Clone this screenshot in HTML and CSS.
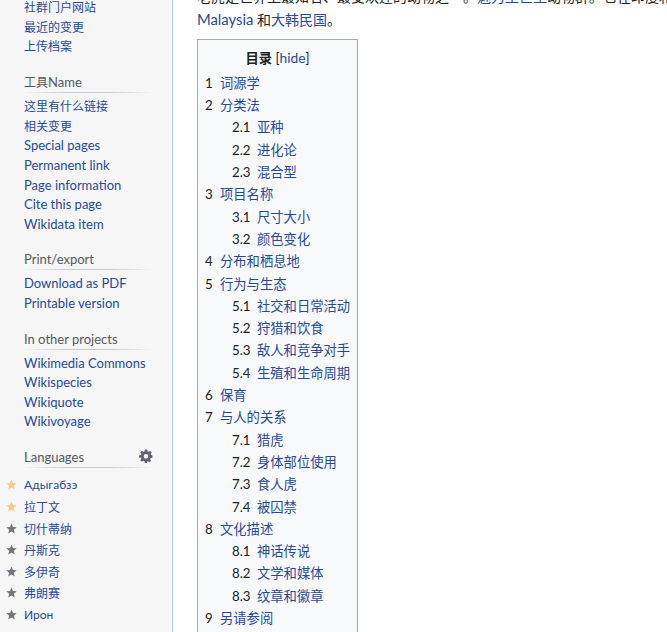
FILE: index.html
```html
<!DOCTYPE html>
<html lang="zh">
<head>
    <meta charset="UTF-8">
    <meta name="viewport" content="width=device-width, initial-scale=1.0">
    <title>虎</title>
    <link rel="stylesheet" href="styles.css">
</head>
<body>
    <div class="page">
        <div class="sidebar">
            <ul class="side-list first-list">
                <li class="cjk"><a href="#">社群门户网站</a></li>
                <li class="cjk"><a href="#">最近的变更</a></li>
                <li class="cjk"><a href="#">上传档案</a></li>
            </ul>

            <div class="side-title"><span class="cjk">工具</span>Name</div>
            <ul class="side-list">
                <li class="cjk"><a href="#">这里有什么链接</a></li>
                <li class="cjk"><a href="#">相关变更</a></li>
                <li><a href="#">Special pages</a></li>
                <li><a href="#">Permanent link</a></li>
                <li><a href="#">Page information</a></li>
                <li><a href="#">Cite this page</a></li>
                <li><a href="#">Wikidata item</a></li>
            </ul>

            <div class="side-title">Print/export</div>
            <ul class="side-list">
                <li><a href="#">Download as PDF</a></li>
                <li><a href="#">Printable version</a></li>
            </ul>

            <div class="side-title">In other projects</div>
            <ul class="side-list">
                <li><a href="#">Wikimedia Commons</a></li>
                <li><a href="#">Wikispecies</a></li>
                <li><a href="#">Wikiquote</a></li>
                <li><a href="#">Wikivoyage</a></li>
            </ul>

            <div class="side-title lang-title">
                Languages
                <svg class="gear" viewBox="0 0 24 24"><path d="M10 1h4l.6 3.1 1.900.8 2.600-1.800 2.800 2.800-1.800 2.600.8 1.900L23 11v4l-3.100.6-.8 1.900 1.800 2.600-2.800 2.800-2.600-1.800-1.900.8L13.900 24h-3.800l-.6-3.100-1.900-.8-2.600 1.800-2.800-2.800 1.800-2.600-.8-1.900L0 15v-4l3.100-.6.8-1.900L2.100 5.900l2.800-2.800 2.600 1.800 1.900-.8zM12 8.500a4 4 0 1 0 0 8 4 4 0 0 0 0-8z" fill-rule="evenodd"/></svg>
            </div>
            <ul class="lang-list">
                <li><svg class="star gold" viewBox="0 0 20 20"><polygon points="10,1 12.700,7.200 19.500,7.800 14.300,12.300 15.900,19 10,15.400 4.100,19 5.700,12.300 .5,7.800 7.300,7.200"/></svg><a href="#">Адыгабзэ</a></li>
                <li class="tall"><svg class="star gold" viewBox="0 0 20 20"><polygon points="10,1 12.700,7.200 19.500,7.800 14.300,12.300 15.900,19 10,15.400 4.100,19 5.700,12.300 .5,7.800 7.300,7.200"/></svg><a href="#">拉丁文</a></li>
                <li><svg class="star" viewBox="0 0 20 20"><polygon points="10,1 12.700,7.200 19.500,7.800 14.300,12.300 15.900,19 10,15.400 4.100,19 5.700,12.300 .5,7.800 7.300,7.200"/></svg><a href="#">切什蒂纳</a></li>
                <li><svg class="star" viewBox="0 0 20 20"><polygon points="10,1 12.700,7.200 19.500,7.800 14.300,12.300 15.900,19 10,15.400 4.100,19 5.700,12.300 .5,7.800 7.300,7.200"/></svg><a href="#">丹斯克</a></li>
                <li><svg class="star" viewBox="0 0 20 20"><polygon points="10,1 12.700,7.200 19.500,7.800 14.300,12.300 15.900,19 10,15.400 4.100,19 5.700,12.300 .5,7.800 7.300,7.200"/></svg><a href="#">多伊奇</a></li>
                <li><svg class="star" viewBox="0 0 20 20"><polygon points="10,1 12.700,7.200 19.500,7.800 14.300,12.300 15.900,19 10,15.400 4.100,19 5.700,12.300 .5,7.800 7.300,7.200"/></svg><a href="#">弗朗赛</a></li>
                <li><svg class="star" viewBox="0 0 20 20"><polygon points="10,1 12.700,7.200 19.500,7.800 14.300,12.300 15.900,19 10,15.400 4.100,19 5.700,12.300 .5,7.800 7.300,7.200"/></svg><a href="#">Ирон</a></li>
            </ul>
        </div>

        <div class="content">
            <p class="intro">老虎是世界上最知名、最受欢迎的动物之一。<a href="#">魅力型巨型</a>动物群。它在印度和孟加拉国、<br><a class="latin" href="#">Malaysia</a> 和<a href="#">大韩民国</a>。</p>

            <div class="toc">
                <div class="toc-title"><b>目录</b> [<a class="latin" href="#">hide</a>]</div>
                <ul class="toc-list">
                    <li><span>1</span><a href="#">词源学</a></li>
                    <li><span>2</span><a href="#">分类法</a></li>
                    <li class="sub"><span>2.1</span><a href="#">亚种</a></li>
                    <li class="sub"><span>2.2</span><a href="#">进化论</a></li>
                    <li class="sub"><span>2.3</span><a href="#">混合型</a></li>
                    <li><span>3</span><a href="#">项目名称</a></li>
                    <li class="sub"><span>3.1</span><a href="#">尺寸大小</a></li>
                    <li class="sub"><span>3.2</span><a href="#">颜色变化</a></li>
                    <li><span>4</span><a href="#">分布和栖息地</a></li>
                    <li><span>5</span><a href="#">行为与生态</a></li>
                    <li class="sub"><span>5.1</span><a href="#">社交和日常活动</a></li>
                    <li class="sub"><span>5.2</span><a href="#">狩猎和饮食</a></li>
                    <li class="sub"><span>5.3</span><a href="#">敌人和竞争对手</a></li>
                    <li class="sub"><span>5.4</span><a href="#">生殖和生命周期</a></li>
                    <li><span>6</span><a href="#">保育</a></li>
                    <li><span>7</span><a href="#">与人的关系</a></li>
                    <li class="sub"><span>7.1</span><a href="#">猎虎</a></li>
                    <li class="sub"><span>7.2</span><a href="#">身体部位使用</a></li>
                    <li class="sub"><span>7.3</span><a href="#">食人虎</a></li>
                    <li class="sub"><span>7.4</span><a href="#">被囚禁</a></li>
                    <li><span>8</span><a href="#">文化描述</a></li>
                    <li class="sub"><span>8.1</span><a href="#">神话传说</a></li>
                    <li class="sub"><span>8.2</span><a href="#">文学和媒体</a></li>
                    <li class="sub"><span>8.3</span><a href="#">纹章和徽章</a></li>
                    <li><span>9</span><a href="#">另请参阅</a></li>
                </ul>
            </div>
        </div>
    </div>
</body>
</html>
```

FILE: styles.css
```css
html, body {
    margin: 0;
    padding: 0;
    height: 632px;
    overflow: hidden;
    background: #ffffff;
}

body {
    font-family: Lato, "Noto Sans CJK SC", sans-serif;
    color: #202122;
}

a {
    color: #27499c;
    text-decoration: none;
}

ul {
    list-style: none;
    margin: 0;
    padding: 0;
}

/* Page is scrolled, so everything starts above the window */
.page {
    display: flex;
    margin-top: -15px;
    min-height: 800px;
}

/* Sidebar */
.sidebar {
    width: 172px;
    flex-shrink: 0;
    padding-top: 13px;
    background: #f6f6f6;
    border-right: 1px solid #a7d7f9;
    font-size: 13px;
}

.cjk {
    font-size: 12px;
}

.side-list {
    padding: 4px 0 15px 24px;
    line-height: 19.6px;
}

.first-list {
    padding-top: 0;
    padding-bottom: 15.5px;
}

.side-title {
    position: relative;
    margin-left: 24px;
    width: 128px;
    height: 20px;
    line-height: 20px;
    font-size: 13px;
    color: #54595d;
    border-bottom: 1px solid;
    border-image: linear-gradient(to right, rgba(200, 204, 209, 0), #c8ccd1 33%, #c8ccd1 66%, rgba(200, 204, 209, 0)) 1;
}

.gear {
    position: absolute;
    right: -1px;
    top: 2px;
    width: 14px;
    height: 14px;
    fill: #645f6e;
}

.lang-list {
    padding-top: 5.500px;
    font-size: 12px;
}

.lang-list li {
    display: flex;
    align-items: center;
    gap: 7px;
    height: 21.5px;
    padding-left: 6px;
}

.lang-list li.tall {
    padding-top: 1px;
}

.star {
    width: 11px;
    height: 11px;
    fill: #72777d;
    flex-shrink: 0;
}

.star.gold {
    fill: #f9c88e;
}

/* Article */
.content {
    flex: 1;
    min-width: 0;
    padding-left: 24px;
    overflow: hidden;
}

.intro {
    margin: 0;
    font-size: 14px;
    line-height: 23px;
    white-space: nowrap;
}

.intro .latin {
    font-size: 14.8px;
}

.toc {
    width: fit-content;
    margin-top: 7.500px;
    padding: 7px 7px 7px 7px;
    background: #f8f9fa;
    border: 1px solid #a2a9b1;
    font-size: 13.3px;
}

.toc-title {
    text-align: center;
    line-height: 22px;
    margin-bottom: 3.4px;
}

.toc-title .latin {
    font-size: 13.8px;
}

.toc-list li {
    display: flex;
    line-height: 22.3px;
}

.toc-list span {
    width: 15px;
    flex-shrink: 0;
}

.toc-list .sub {
    padding-left: 27px;
}

.toc-list .sub span {
    width: 25px;
}
```
